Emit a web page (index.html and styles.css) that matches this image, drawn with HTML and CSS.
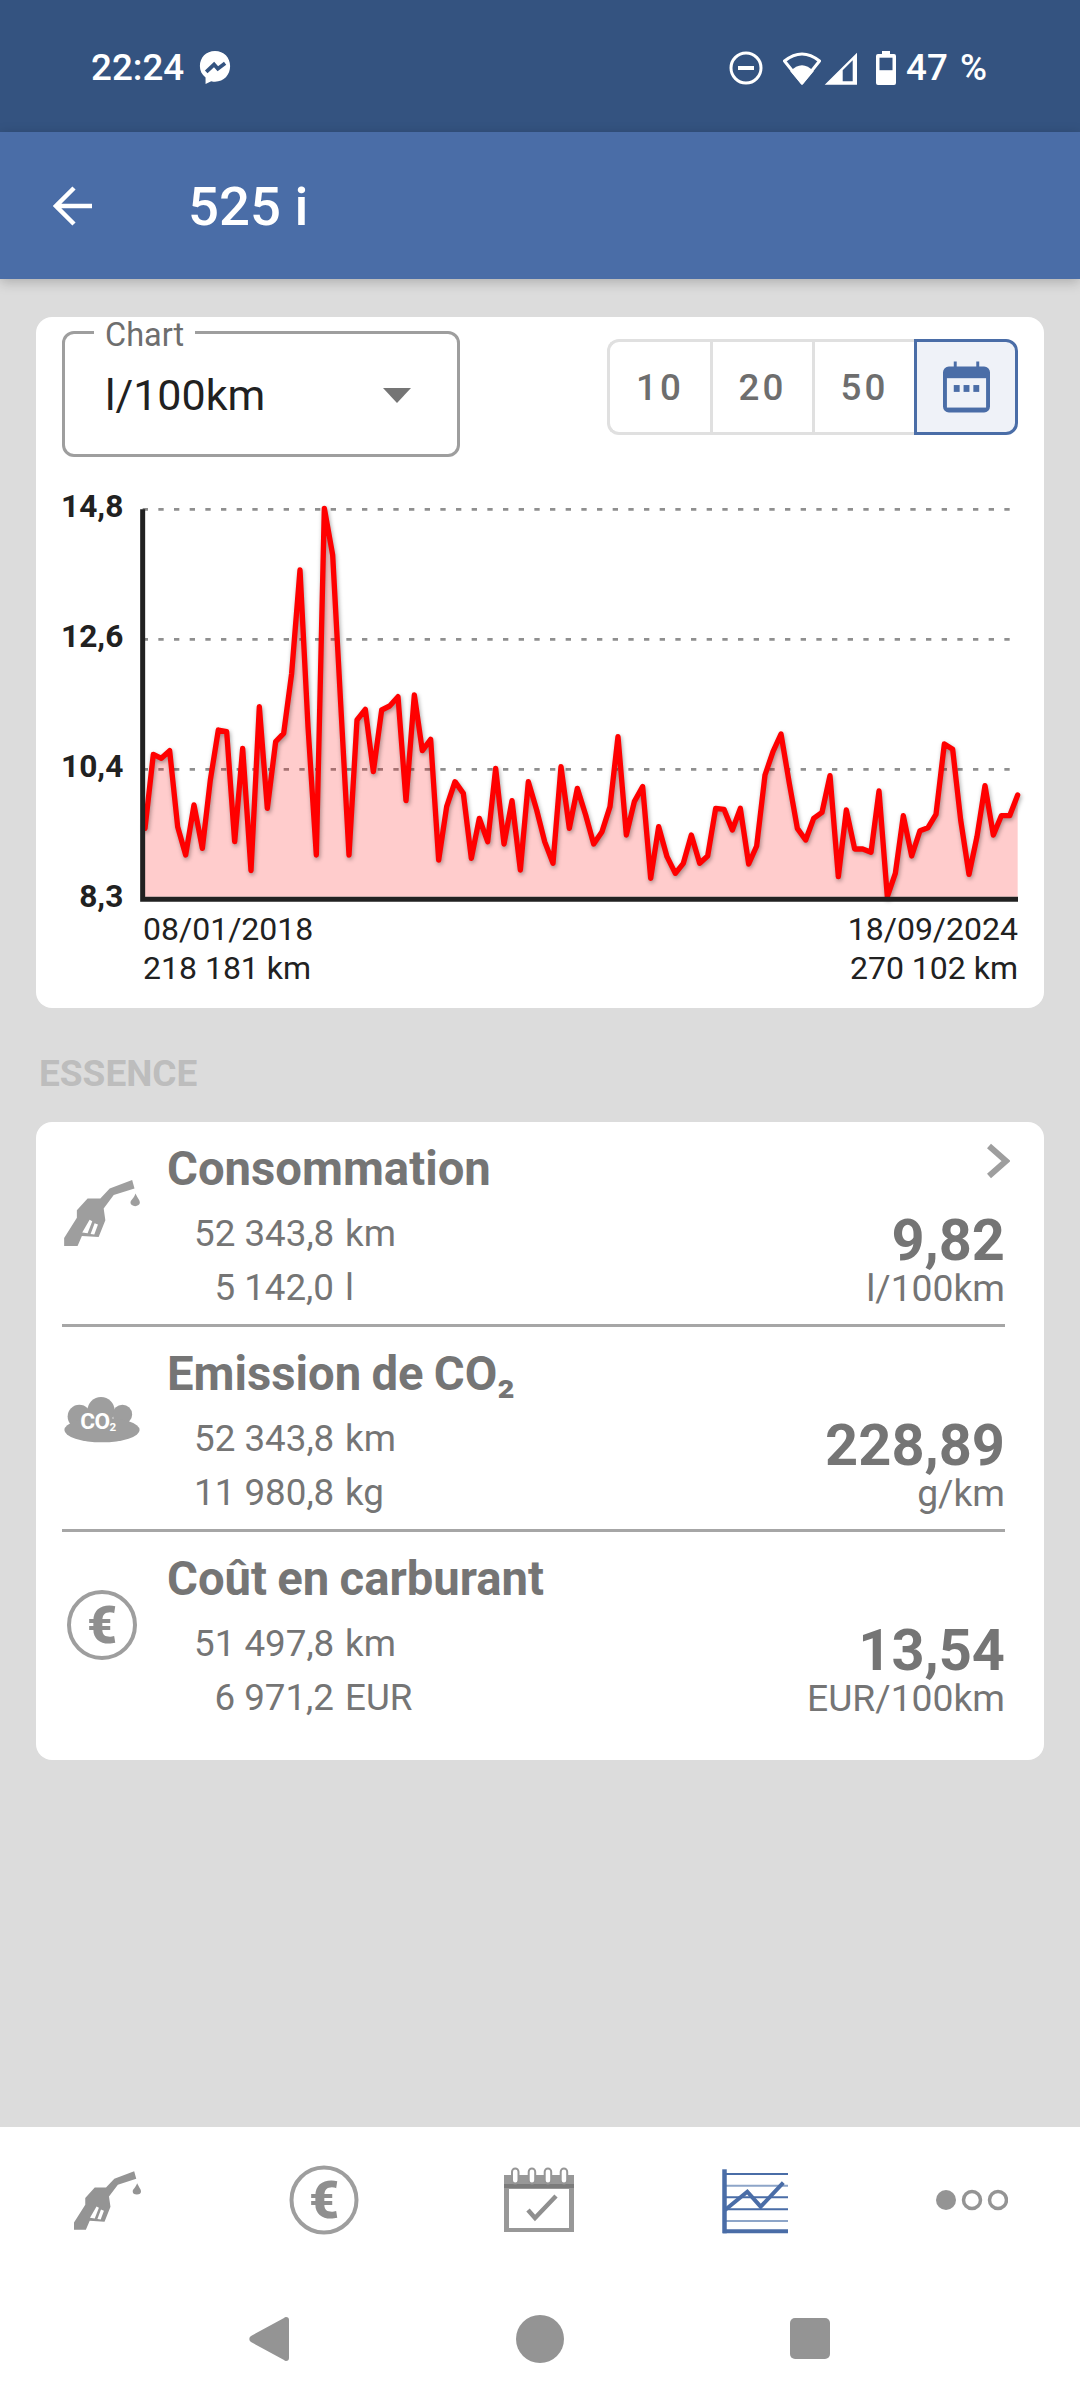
FILE: index.html
```html
<!DOCTYPE html>
<html lang="fr">
<head>
<meta charset="utf-8">
<title>525 i</title>
<link rel="stylesheet" href="styles.css">
</head>
<body>
<svg class="defs" aria-hidden="true">
  <symbol id="pump" viewBox="42 95 226 197">
    <path fill-rule="evenodd" d="M42 292L42 268L80 208L80 185L112 150L150 150L178 120L245 95L252 120L190 140L160 180L165 215L145 265L95 262L82 292ZM118 214L96 252L112 254L126 218ZM133 224L121 256L132 258L143 228Z"/>
    <path d="M255 135C262 150 268 155 268 162A14 11 0 0 1 240 162C240 155 250 150 255 135Z"/>
  </symbol>
</svg>
<div class="phone">
  <header class="status">
    <div class="status-left">
      <span class="status-time">22:24</span>
      <svg class="ic-msg" viewBox="0 0 36 38"><path class="white" d="M18 1C8.500 1 2 8 2 17C2 22 4 26 8 29L8 36L14 33C15.500 33.500 17 33.500 18 33.500C27.500 33.500 34 26.500 34 17C34 8 27.500 1 18 1Z"/><path class="bolt" d="M8.700 23L17 15.300L21 19.700L28.700 14"/></svg>
    </div>
    <div class="status-right">
      <svg class="ic-dnd" viewBox="0 0 34 34"><circle cx="17" cy="17" r="15"/><rect x="9" y="15" width="16" height="4"/></svg>
      <svg class="ic-wifi" viewBox="0 0 40 33"><path class="outline" d="M20 31L2.500 9Q20 -5 37.500 9Z"/><path class="white" d="M20 33L8.300 19.300Q20 7.300 31.700 19.300Z"/></svg>
      <svg class="ic-signal" viewBox="0 0 33 33"><path class="white" fill-rule="evenodd" d="M.7 32.700L33 .7V32.700ZM18.700 18.300L28.700 8.300V29.300H18.700Z"/></svg>
      <svg class="ic-batt" viewBox="0 0 20 34"><path class="white" d="M6 0H14V3H18A2 2 0 0 1 20 5V32A2 2 0 0 1 18 34H2A2 2 0 0 1 0 32V5A2 2 0 0 1 2 3H6Z"/><rect class="blue-dark" x="3.500" y="6.700" width="13" height="12.500"/></svg>
      <span class="status-pct">47 %</span>
    </div>
  </header>

  <div class="appbar">
    <svg class="ic-back" viewBox="0 0 42 42"><path d="M39 21H4M21 3L3 21L21 39"/></svg>
    <h1 class="appbar-title">525 i</h1>
  </div>

  <main class="main">
    <section class="card chart-card">
      <div class="chart-head">
        <div class="select">
          <span class="select-label">Chart</span>
          <span class="select-value">l/100km</span>
          <span class="select-caret"></span>
        </div>
        <div class="segments">
          <span class="segment">10</span>
          <span class="segment">20</span>
          <span class="segment">50</span>
          <span class="segment segment-on">
            <svg class="ic-cal" viewBox="0 0 48 52"><path d="M11 0H14V5H34V0H37V5H42A6 6 0 0 1 48 11V46A6 6 0 0 1 42 52H6A6 6 0 0 1 0 46V11A6 6 0 0 1 6 5H11Z"/><rect class="cal-face" x="4" y="17" width="40" height="30"/><rect x="11" y="24" width="6" height="7"/><rect x="21" y="24" width="6" height="7"/><rect x="31" y="24" width="6" height="7"/></svg>
          </span>
        </div>
      </div>
      <svg class="chart" viewBox="-12 0 3024 1350">
        <g class="grid">
          <line x1="308" y1="88" x2="2925" y2="88"/>
          <line x1="308" y1="478" x2="2925" y2="478"/>
          <line x1="308" y1="868" x2="2925" y2="868"/>
        </g>
        <polygon class="area" points="315,1250 315,1045 340,823 364,835 389,812 413,1040 437,1125 462,975 487,1105 511,900 535,750 560,755 584,1085 608,805 633,1172 658,680 682,985 707,785 731,760 755,580 780,270 804,740 829,1125 853,85 878,225 902,670 927,1125 951,720 976,688 1000,875 1025,690 1049,678 1074,650 1098,962 1123,645 1147,812 1172,778 1196,1140 1220,980 1245,905 1270,940 1294,1135 1318,1015 1343,1085 1367,865 1392,1092 1416,962 1441,1170 1465,905 1490,990 1514,1085 1539,1150 1563,860 1588,1045 1612,925 1637,1005 1661,1092 1686,1055 1710,980 1734,770 1759,1065 1783,965 1808,920 1832,1195 1856,1040 1881,1130 1906,1180 1930,1150 1954,1065 1979,1150 2003,1128 2027,985 2052,988 2077,1050 2101,985 2126,1152 2150,1098 2175,885 2199,815 2223,762 2248,910 2272,1045 2297,1080 2321,1015 2346,997 2370,887 2395,1190 2419,990 2444,1107 2468,1107 2493,1117 2517,933 2542,1250 2566,1180 2590,1007 2615,1128 2640,1052 2664,1043 2688,1003 2713,792 2738,808 2762,1020 2787,1183 2811,1070 2835,917 2860,1065 2884,1007 2909,1007 2933,945 2933,1250"/>
        <polyline class="line" points="315,1045 340,823 364,835 389,812 413,1040 437,1125 462,975 487,1105 511,900 535,750 560,755 584,1085 608,805 633,1172 658,680 682,985 707,785 731,760 755,580 780,270 804,740 829,1125 853,85 878,225 902,670 927,1125 951,720 976,688 1000,875 1025,690 1049,678 1074,650 1098,962 1123,645 1147,812 1172,778 1196,1140 1220,980 1245,905 1270,940 1294,1135 1318,1015 1343,1085 1367,865 1392,1092 1416,962 1441,1170 1465,905 1490,990 1514,1085 1539,1150 1563,860 1588,1045 1612,925 1637,1005 1661,1092 1686,1055 1710,980 1734,770 1759,1065 1783,965 1808,920 1832,1195 1856,1040 1881,1130 1906,1180 1930,1150 1954,1065 1979,1150 2003,1128 2027,985 2052,988 2077,1050 2101,985 2126,1152 2150,1098 2175,885 2199,815 2223,762 2248,910 2272,1045 2297,1080 2321,1015 2346,997 2370,887 2395,1190 2419,990 2444,1107 2468,1107 2493,1117 2517,933 2542,1250 2566,1180 2590,1007 2615,1128 2640,1052 2664,1043 2688,1003 2713,792 2738,808 2762,1020 2787,1183 2811,1070 2835,917 2860,1065 2884,1007 2909,1007 2933,945"/>
        <path class="axis" d="M308 88V1258H2934"/>
        <g class="ylabels">
          <text x="250" y="112">14,8</text>
          <text x="250" y="501">12,6</text>
          <text x="250" y="891">10,4</text>
          <text x="250" y="1280">8,3</text>
        </g>
      </svg>
      <div class="chart-foot">
        <div>08/01/2018<br>218 181 km</div>
        <div class="chart-foot-end">18/09/2024<br>270 102 km</div>
      </div>
    </section>

    <h2 class="section-title">ESSENCE</h2>

    <section class="card list-card">
      <article class="row">
        <svg class="row-icon ic-pump"><use href="#pump"/></svg>
        <div class="row-body">
          <h3 class="row-title">Consommation</h3>
          <dl class="row-data">
            <dt>52 343,8</dt><dd>km</dd>
            <dt>5 142,0</dt><dd>l</dd>
          </dl>
        </div>
        <div class="row-result">
          <strong>9,82</strong>
          <span>l/100km</span>
        </div>
        <svg class="chevron" viewBox="0 0 24 36"><path d="M3 3L20 18L3 33"/></svg>
      </article>
      <article class="row">
        <svg class="row-icon ic-cloud" viewBox="95 195 240 145">
          <circle cx="212" cy="240" r="42"/><circle cx="278" cy="252" r="30"/><circle cx="145" cy="258" r="36"/>
          <ellipse cx="215" cy="300" rx="116" ry="38"/>
          <text class="cloud-text" x="148" y="296">CO<tspan class="cloud-sub" dy="8">2</tspan></text>
        </svg>
        <div class="row-body">
          <h3 class="row-title">Emission de CO₂</h3>
          <dl class="row-data">
            <dt>52 343,8</dt><dd>km</dd>
            <dt>11 980,8</dt><dd>kg</dd>
          </dl>
        </div>
        <div class="row-result">
          <strong>228,89</strong>
          <span>g/km</span>
        </div>
      </article>
      <article class="row">
        <svg class="row-icon ic-euro" viewBox="0 0 70 70">
          <circle class="euro-ring" cx="35" cy="35" r="33"/>
          <text class="euro-sign" x="35" y="53">€</text>
        </svg>
        <div class="row-body">
          <h3 class="row-title">Coût en carburant</h3>
          <dl class="row-data">
            <dt>51 497,8</dt><dd>km</dd>
            <dt>6 971,2</dt><dd>EUR</dd>
          </dl>
        </div>
        <div class="row-result">
          <strong>13,54</strong>
          <span>EUR/100km</span>
        </div>
      </article>
    </section>
  </main>

  <nav class="tabs">
    <svg class="tab-pump"><use href="#pump"/></svg>
    <svg class="tab-euro" viewBox="0 0 70 70">
      <circle class="euro-ring" cx="35" cy="35" r="32.500"/>
      <text class="euro-sign" x="35" y="53">€</text>
    </svg>
    <svg class="tab-cal" viewBox="0 0 70 66">
      <rect class="cal-body" x="0" y="8" width="70" height="57"/>
      <rect class="cal-dark" x="0" y="17" width="70" height="4"/>
      <rect class="cal-face-tab" x="5" y="22" width="60" height="39"/>
      <rect class="cal-ring" x="8" y="1.500" width="6.500" height="15" rx="3.250"/><rect class="cal-ring" x="24.700" y="1.500" width="6.500" height="15" rx="3.250"/><rect class="cal-ring" x="40.700" y="1.500" width="6.500" height="15" rx="3.250"/><rect class="cal-ring" x="56.700" y="1.500" width="6.500" height="15" rx="3.250"/>
      <path class="cal-check" d="M24 43L31 51L52 29"/>
    </svg>
    <svg class="tab-chart" viewBox="0 0 68 66">
      <path class="tc-thin" d="M3 6H66M3 29.300H66M3 41.300H66"/>
      <path class="tc-pale" d="M3 17.700H66M3 53H66"/>
      <path class="tc-axis" d="M2.500 1.300V65.300"/>
      <path class="tc-base" d="M1 63.300H66"/>
      <path class="tc-line" d="M3 42L25.300 23.700L38.700 38.700L61.300 14.700"/>
    </svg>
    <svg class="tab-more" viewBox="0 0 72 22">
      <circle class="more-full" cx="10" cy="11" r="10"/>
      <circle class="more-ring" cx="36" cy="11" r="8.500"/>
      <circle class="more-ring" cx="62" cy="11" r="8.500"/>
    </svg>
  </nav>

  <footer class="sysnav">
    <svg class="nav-back" viewBox="0 0 40 44"><path d="M37 0A3 3 0 0 1 40 3V41A3 3 0 0 1 37 44A3 3 0 0 1 35 43L2 25A3.500 3.500 0 0 1 2 19L35 1A3 3 0 0 1 37 0Z"/></svg>
    <span class="nav-home"></span>
    <span class="nav-square"></span>
  </footer>
</div>
</body>
</html>
```

FILE: styles.css
```css
* { box-sizing: border-box; }
html, body { margin: 0; padding: 0; }
body { font-family: Roboto, "Noto Sans", sans-serif; background: #dcdcdc; }
.defs { display: none; }
.phone { width: 1080px; height: 2400px; display: flex; flex-direction: column; overflow: hidden; background: #dcdcdc; }

/* status bar */
.status { height: 132px; flex: none; background: #345380; color: #fff; display: flex; justify-content: space-between; align-items: center; padding: 4px 93px 0 91px; }
.status-left, .status-right { display: flex; align-items: center; }
.status-time, .status-pct { font-size: 36.750px; font-weight: 500; line-height: 40px; }
.status svg { display: block; flex: none; }
.white { fill: #fff; }
.bolt { fill: none; stroke: #345380; stroke-width: 4; }
.blue-dark { fill: #345380; }
.outline { fill: none; stroke: #fff; stroke-width: 3; stroke-linejoin: round; }
.ic-msg { width: 34px; height: 36px; margin-left: 14px; }
.ic-dnd { width: 34px; height: 34px; fill: #fff; }
.ic-dnd circle { fill: none; stroke: #fff; stroke-width: 3; }
.ic-wifi { width: 40px; height: 33px; margin-left: 19px; }
.ic-signal { width: 33px; height: 33px; margin-left: 2px; }
.ic-batt { width: 20px; height: 34px; margin-left: 19px; }
.status-pct { margin-left: 10px; word-spacing: 3px; }

/* app bar */
.appbar { height: 147px; flex: none; background: #4a6da7; display: flex; align-items: center; padding-left: 53px; color: #fff; position: relative; box-shadow: 0 3px 12px rgba(0,0,0,.22); }
.ic-back { width: 42px; height: 42px; flex: none; fill: none; stroke: #fff; stroke-width: 4.500; }
.appbar-title { margin: 0 0 0 93px; font-size: 54.500px; font-weight: 500; line-height: 60px; }

/* main */
.main { flex: 1; padding: 38px 36px 0; }
.card { background: #fff; border-radius: 16px; }
.chart-card { height: 691px; padding: 14px 26px 0; position: relative; display: flex; flex-direction: column; }
.chart-head { display: flex; justify-content: space-between; align-items: flex-start; height: 149px; flex: none; }
.select { width: 398px; height: 126px; flex: none; border: 3px solid #9e9e9e; border-radius: 12px; position: relative; display: flex; align-items: center; justify-content: space-between; padding: 2px 46px 0 40px; }
.select-label { position: absolute; left: 29px; top: -17px; padding: 0 11px; background: #fff; font-size: 32.500px; line-height: 36px; color: #6e6e6e; }
.select-value { font-size: 43px; line-height: 50px; color: #212121; }
.select-caret { width: 0; height: 0; border-left: 14px solid transparent; border-right: 14px solid transparent; border-top: 15px solid #757575; }
.segments { display: flex; height: 96px; margin-top: 8px; width: 411px; flex: none; }
.segment { width: 102px; height: 96px; flex: none; display: flex; align-items: center; justify-content: center; border: 3px solid #e0e0e0; border-right: 0; font-size: 36.750px; font-weight: 500; letter-spacing: 3px; color: #6e6e6e; }
.segment:first-child { width: 103px; border-radius: 12px 0 0 12px; }
.segment-on { width: 104px; border: 3px solid #4a6da7; border-radius: 0 12px 12px 0; background: #eff2f8; }
.ic-cal { width: 47px; height: 52px; fill: #4a6da7; display: block; }
.cal-face { fill: #eff2f8; }
.chart { display: block; width: 1008px; height: 450px; flex: none; margin: 0 -26px; }
.grid line { stroke: #8f8f8f; stroke-width: 8; stroke-dasharray: 16 31; }
.area { fill: rgba(255, 0, 0, .2); }
.line { fill: none; stroke: #ff0000; stroke-width: 16; stroke-linejoin: round; stroke-linecap: round; filter: drop-shadow(3px 6px 6px rgba(0,0,0,.35)); }
.axis { fill: none; stroke: #212121; stroke-width: 15; }
.ylabels text { font-family: Roboto, sans-serif; font-size: 95px; font-weight: 700; fill: #212121; text-anchor: end; }
.chart-foot { display: flex; justify-content: space-between; margin: -20px 0 0 81px; font-size: 32px; line-height: 39px; color: #212121; }
.chart-foot-end { text-align: right; }
.section-title { margin: 0; height: 114px; padding: 43px 0 0 3px; font-size: 37px; line-height: 46px; font-weight: 700; color: #bdbdbd; }

/* list */
.list-card { height: 638px; padding: 0 39px 0 26px; }
.row { height: 205px; display: flex; position: relative; border-bottom: 3px solid #a6a6a6; }
.row:last-child { border-bottom: 0; }
.row-icon { position: absolute; left: 2px; }
.ic-pump { width: 76px; height: 66px; top: 58px; fill: #9e9e9e; }
.ic-cloud { width: 78px; height: 47px; top: 69px; fill: #9e9e9e; left: 1px; }
.cloud-text { fill: #fff; font-family: Roboto, sans-serif; font-size: 70px; font-weight: 700; letter-spacing: -2px; }
.cloud-sub { font-size: 36px; }
.ic-euro { width: 70px; height: 70px; top: 58px; left: 5px; }
.euro-ring { fill: none; stroke: #9e9e9e; stroke-width: 4; }
.euro-sign { fill: #8f8f8f; font-family: Roboto, sans-serif; font-size: 52px; font-weight: 900; text-anchor: middle; }
.row-body { margin-left: 105px; flex: 1; padding-top: 20px; color: #757575; }
.row-title { margin: 0; font-size: 47.250px; line-height: 55px; font-weight: 700; word-spacing: -1.500px; color: #757575; }
.row-data { margin: 10px 0 0 27px; display: grid; grid-template-columns: 140px auto; justify-content: start; column-gap: 11px; font-size: 36.750px; line-height: 54px; }
.row-data dt { text-align: right; white-space: nowrap; }
.row-data dd { margin: 0; }
.row-result { display: flex; flex-direction: column; align-items: flex-end; padding-top: 91px; color: #757575; }
.row-result strong { font-size: 57.750px; line-height: 54px; font-weight: 700; }
.row-result span { margin-top: 3px; font-size: 37.250px; line-height: 36px; }
.chevron { position: absolute; right: -5px; top: 21px; width: 24px; height: 36px; fill: none; stroke: #9e9e9e; stroke-width: 6; }

/* tabs */
.tabs { height: 151px; flex: none; background: #fff; display: block; position: relative; }
.tabs svg { position: absolute; }
.tab-pump { left: 74px; top: 44px; width: 67px; height: 59px; fill: #949494; }
.tab-euro { left: 289px; top: 38px; width: 70px; height: 70px; }
.tab-cal { left: 504px; top: 40px; width: 70px; height: 66px; }
.cal-body { fill: #989898; }
.cal-dark { fill: #7c7c7c; }
.cal-face-tab { fill: #fff; }
.cal-ring { fill: #fff; stroke: #969696; stroke-width: 2; }
.cal-check { fill: none; stroke: #8f8f8f; stroke-width: 4.500; }
.tab-chart { left: 722px; top: 41px; width: 68px; height: 66px; }
.tc-thin { stroke: #4a6da7; stroke-width: 2; fill: none; }
.tc-pale { stroke: #8da5c8; stroke-width: 2; fill: none; }
.tc-axis { stroke: #4a6da7; stroke-width: 4.500; fill: none; }
.tc-base { stroke: #4a6da7; stroke-width: 4; fill: none; }
.tc-line { stroke: #4a6da7; stroke-width: 4; fill: none; }
.tab-more { left: 936px; top: 62px; width: 72px; height: 22px; }
.more-full { fill: #949494; }
.more-ring { fill: none; stroke: #949494; stroke-width: 3.500; }

/* system nav */
.sysnav { height: 122px; flex: none; background: #fff; display: block; position: relative; }
.sysnav > * { position: absolute; }
.nav-back { left: 249px; top: 39px; width: 40px; height: 44px; fill: #949494; }
.nav-home { left: 516px; top: 37px; width: 48px; height: 48px; border-radius: 50%; background: #949494; }
.nav-square { left: 790px; top: 40px; width: 40px; height: 41px; border-radius: 5px; background: #949494; }
```
